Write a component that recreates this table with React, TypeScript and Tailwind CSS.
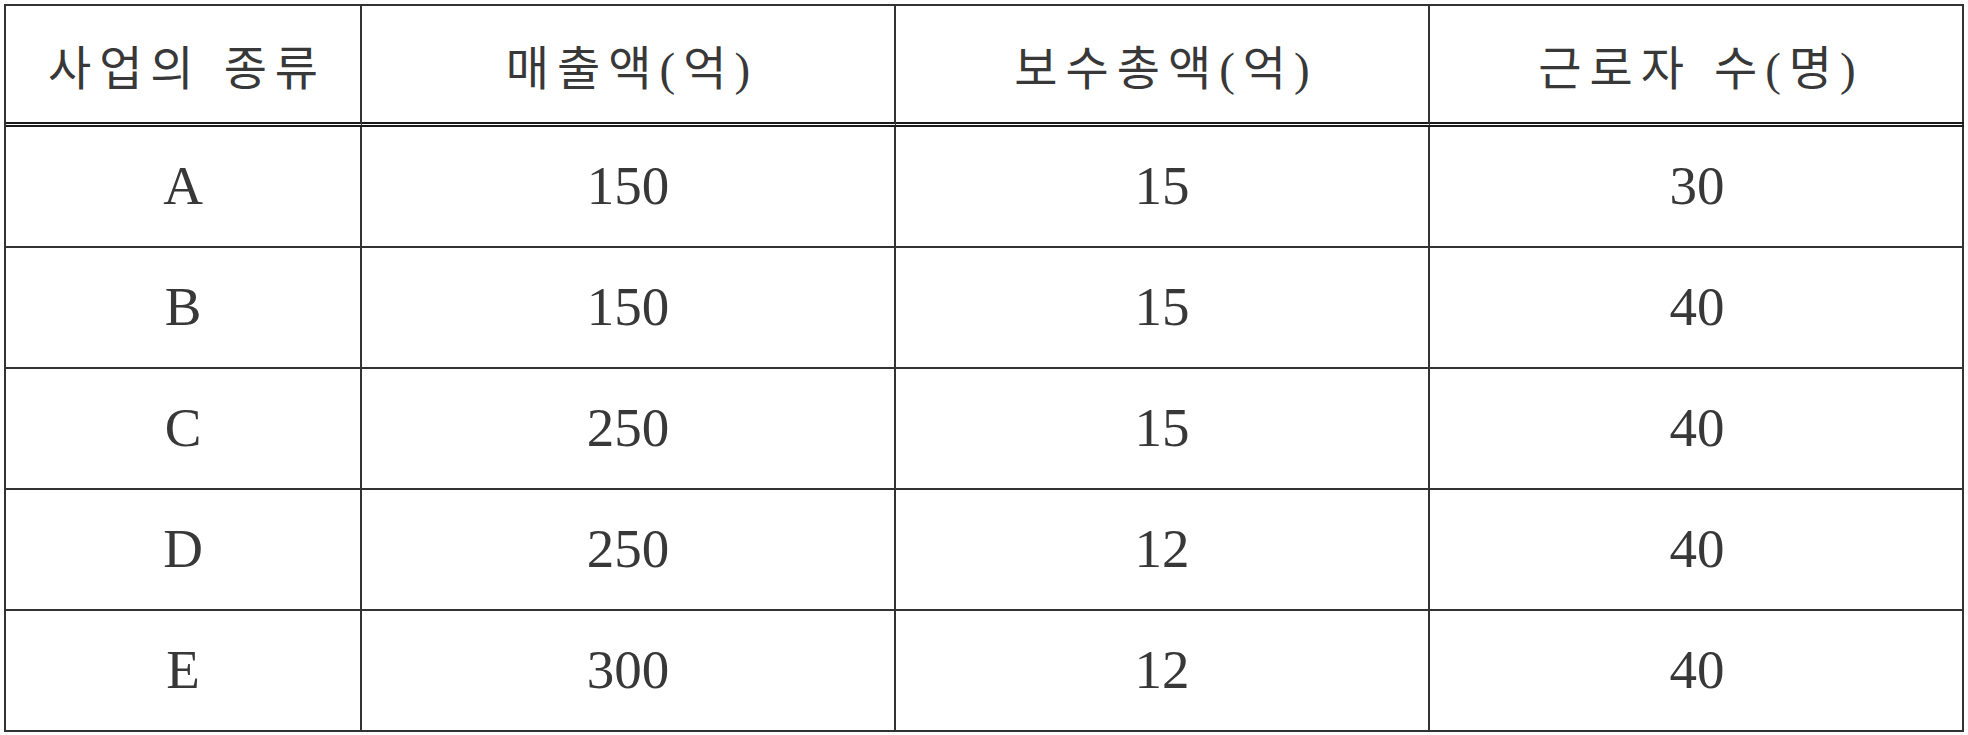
const headers = [
  ["사업의", "종류"],
  ["매출액(억)"],
  ["보수총액(억)"],
  ["근로자", "수(명)"],
];

const rows = [
  ["A", "150", "15", "30"],
  ["B", "150", "15", "40"],
  ["C", "250", "15", "40"],
  ["D", "250", "12", "40"],
  ["E", "300", "12", "40"],
];

const fontStack = "font-['Liberation_Serif','Noto_Sans_CJK_KR',serif]";

export default function App() {
  return (
    <div className="min-h-screen bg-white pl-[4px] pt-[4px]">
      <div
        className={`grid w-[1960px] grid-cols-[356px_534px_534px_534px] border-2 border-[#333] text-[#383838] ${fontStack}`}
      >
        {headers.map((words, i) => (
          <div
            key={i}
            className={`flex h-[121px] items-center justify-center gap-[22px] border-b-[5px] border-double border-b-[#1a1a1a] pl-[8px] pt-[10px] text-[47px] tracking-[8px] ${
              i < 3 ? "border-r-2 border-r-[#333]" : ""
            }`}
          >
            {words.map((w) => (
              <span key={w}>{w}</span>
            ))}
          </div>
        ))}
        {rows.map((row, r) =>
          row.map((cell, c) => (
            <div
              key={`${r}-${c}`}
              className={`flex items-center justify-center text-[55px] ${
                r < rows.length - 1 ? "h-[121px] border-b-2 border-b-[#333]" : "h-[119px]"
              } ${c < 3 ? "border-r-2 border-r-[#333]" : ""}`}
            >
              {cell}
            </div>
          ))
        )}
      </div>
    </div>
  );
}
